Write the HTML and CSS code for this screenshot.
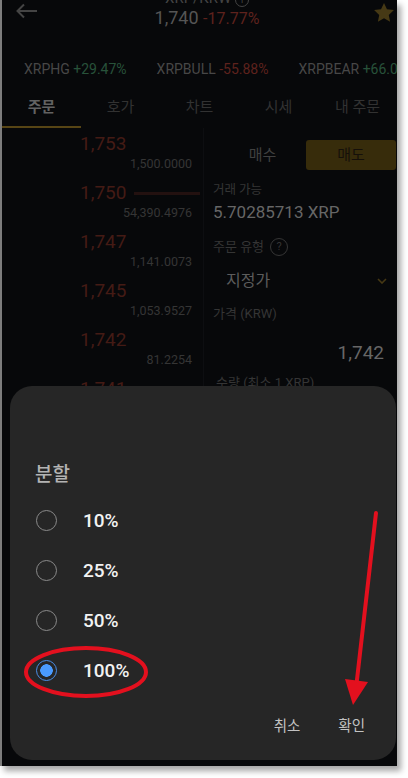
FILE: index.html
```html
<!DOCTYPE html>
<html>
<head>
    <title>XRP/KRW 주문</title>
    <link rel="stylesheet" href="styles.css">
</head>
<body>
    <div class="phone">
        <!-- Header -->
        <header class="top-bar">
            <svg class="back-icon" width="22" height="16" viewBox="0 0 22 16">
                <path d="M21 8H2M8 1.5L1.5 8L8 14.5" fill="none" stroke="#444" stroke-width="2"/>
            </svg>
            <div class="title-block">
                <div class="pair-name">XRP/KRW <span class="info-dot">i</span></div>
                <div class="pair-price">1,740 <span class="down">-17.77%</span></div>
            </div>
            <svg class="star-icon" width="20" height="19" viewBox="0 0 24 23">
                <path d="M12 0l3.6 7.6 8.4 1-6.2 5.8 1.6 8.3L12 18.6l-7.4 4.1 1.6-8.3L0 8.6l8.4-1z" fill="#463915"/>
            </svg>
        </header>

        <!-- Related tickers -->
        <div class="tickers">
            <span class="ticker">XRPHG <span class="up">+29.47%</span></span>
            <span class="ticker">XRPBULL <span class="down">-55.88%</span></span>
            <span class="ticker">XRPBEAR <span class="up">+66.05%</span></span>
        </div>

        <!-- Tabs -->
        <nav class="tabs">
            <div class="tab active">주문</div>
            <div class="tab">호가</div>
            <div class="tab">차트</div>
            <div class="tab">시세</div>
            <div class="tab">내 주문</div>
        </nav>

        <div class="trade">
            <!-- Order book -->
            <div class="book">
                <div class="book-row">
                    <div class="book-price">1,753</div>
                    <div class="book-qty">1,500.0000</div>
                </div>
                <div class="book-row">
                    <div class="book-price">1,750 <span class="depth-bar"></span></div>
                    <div class="book-qty">54,390.4976</div>
                </div>
                <div class="book-row">
                    <div class="book-price">1,747</div>
                    <div class="book-qty">1,141.0073</div>
                </div>
                <div class="book-row">
                    <div class="book-price">1,745</div>
                    <div class="book-qty">1,053.9527</div>
                </div>
                <div class="book-row">
                    <div class="book-price">1,742</div>
                    <div class="book-qty">81.2254</div>
                </div>
                <div class="book-row">
                    <div class="book-price">1,741</div>
                    <div class="book-qty">1,030.0000</div>
                </div>
            </div>

            <!-- Order form -->
            <div class="order-form">
                <div class="side-toggle">
                    <div class="side buy">매수</div>
                    <div class="side sell">매도</div>
                </div>
                <div class="field-label">거래 가능</div>
                <div class="balance">5.70285713 XRP</div>
                <div class="field-label type-label">주문 유형 <span class="help">?</span></div>
                <div class="select-row">
                    <span>지정가</span>
                    <svg width="10" height="6" viewBox="0 0 10 6"><path d="M1 1l4 4 4-4" fill="none" stroke="#463814" stroke-width="1.6"/></svg>
                </div>
                <div class="field-label price-label">가격 (KRW)</div>
                <div class="price-input">1,742</div>
                <div class="field-label qty-label">수량 (최소 1 XRP)</div>
            </div>
        </div>

        <!-- Split dialog -->
        <div class="scrim">
            <div class="sheet">
                <div class="sheet-title">분할</div>
                <div class="option"><span class="radio"></span><span class="option-label">10%</span></div>
                <div class="option"><span class="radio"></span><span class="option-label">25%</span></div>
                <div class="option"><span class="radio"></span><span class="option-label">50%</span></div>
                <div class="option"><span class="radio checked"></span><span class="option-label">100%</span></div>
                <div class="sheet-actions">
                    <span class="action">취소</span>
                    <span class="action">확인</span>
                </div>
            </div>
        </div>
    </div>

    <!-- Red markup drawn over the screenshot -->
    <svg class="marks" width="408" height="778" viewBox="0 0 408 778">
        <ellipse cx="86" cy="672" rx="60" ry="24" fill="none" stroke="#e3101e" stroke-width="4"/>
        <path d="M376 513L356.5 684" stroke="#e3101e" stroke-width="4" stroke-linecap="round"/>
        <path d="M345 679L368 682L353 705z" fill="#e3101e"/>
    </svg>
</body>
</html>
```

FILE: styles.css
```css
body {
    margin: 0;
    background-color: #fff;
    position: relative;
    width: 408px;
    height: 778px;
    overflow: hidden;
}
.phone {
    position: relative;
    width: 395px;
    height: 766px;
    border-left: 2px solid #7d7d7d;
    background-color: #07080a;
    box-shadow: 4px 5px 6px rgba(0, 0, 0, 0.35);
    overflow: hidden;
    font-family: Roboto, "Noto Sans CJK KR", sans-serif;
}

/* Header */
.top-bar {
    height: 50px;
    display: flex;
    align-items: flex-start;
}
.back-icon {
    margin: 3px 0 0 14px;
}
.title-block {
    flex: 1;
    margin-top: -11px;
    padding-left: 2px;
    text-align: center;
}
.pair-name {
    font-size: 15px;
    line-height: 18px;
    color: #444;
}
.info-dot {
    display: inline-block;
    width: 12px;
    height: 12px;
    border: 1px solid #444;
    border-radius: 50%;
    font-size: 9px;
    line-height: 12px;
}
.pair-price {
    font-size: 18px;
    line-height: 22px;
    color: #555;
}
.pair-price .down {
    font-size: 16px;
}
.star-icon {
    margin: 3px 3px 0 0;
}
.up {
    color: #28523a;
}
.down {
    color: #5e221d;
}

/* Tickers */
.tickers {
    height: 38px;
    display: flex;
    align-items: center;
    gap: 30px;
    padding-left: 22px;
    white-space: nowrap;
    font-size: 14px;
    color: #474747;
}

/* Tabs */
.tabs {
    height: 40px;
    display: flex;
}
.tab {
    flex: 1;
    text-align: center;
    font-size: 15px;
    line-height: 38px;
    color: #323232;
    border-bottom: 2px solid transparent;
}
.tab.active {
    color: #626262;
    font-weight: bold;
    border-bottom-color: #574515;
}

/* Order book + form */
.trade {
    display: flex;
}
.book {
    width: 201px;
    padding-top: 5px;
    border-right: 1px solid #0d0e11;
}
.book-row {
    height: 49px;
}
.book-price {
    display: flex;
    align-items: center;
    padding-left: 78px;
    font-size: 19px;
    line-height: 22px;
    color: #441b15;
}
.depth-bar {
    width: 66px;
    height: 3px;
    margin-left: auto;
    margin-right: 3px;
    background-color: #231110;
}
.book-qty {
    margin-top: 2px;
    padding-right: 11px;
    text-align: right;
    font-size: 12.5px;
    line-height: 14px;
    color: #353535;
}

.order-form {
    flex: 1;
    padding-left: 9px;
}
.side-toggle {
    display: flex;
    margin-top: 12px;
    height: 30px;
}
.side {
    font-size: 15px;
    line-height: 30px;
    text-align: center;
}
.side.buy {
    flex: 1;
    padding-left: 6px;
    color: #404040;
}
.side.sell {
    width: 90px;
    margin-right: 1px;
    border-radius: 3px;
    background-color: #372c0b;
    color: #15100a;
}
.field-label {
    margin-top: 12px;
    font-size: 12.5px;
    line-height: 16px;
    color: #353535;
}
.balance {
    margin-top: 3px;
    font-size: 17px;
    line-height: 22px;
    color: #666;
}
.type-label {
    display: flex;
    align-items: center;
    gap: 6px;
    margin-top: 15px;
    font-size: 13px;
}
.help {
    width: 16px;
    height: 16px;
    border: 1px solid #353535;
    border-radius: 50%;
    text-align: center;
    font-size: 11px;
    line-height: 16px;
}
.select-row {
    display: flex;
    align-items: center;
    justify-content: space-between;
    margin-top: 14px;
    padding: 0 10px 0 13px;
    font-size: 16px;
    line-height: 22px;
    color: #5c5c5c;
}
.price-label {
    margin-top: 14px;
    font-size: 13px;
}
.price-input {
    margin-top: 20px;
    padding-right: 13px;
    text-align: right;
    font-size: 19px;
    line-height: 22px;
    color: #666;
}
.qty-label {
    margin-top: 11px;
    padding-left: 3px;
    font-size: 13px;
}

/* Dialog */
.scrim {
    position: absolute;
    inset: 0;
    display: flex;
    align-items: flex-end;
    padding: 0 1px 6px 8px;
}
.sheet {
    flex: 1;
    height: 374px;
    box-sizing: border-box;
    padding: 76px 31px 0 25px;
    border-radius: 22px;
    background-color: #262626;
}
.sheet-title {
    font-size: 19px;
    line-height: 26px;
    font-weight: 500;
    color: #b3b3b3;
    margin-bottom: 7px;
}
.option {
    height: 50px;
    display: flex;
    align-items: center;
}
.radio {
    box-sizing: border-box;
    width: 21px;
    height: 21px;
    margin-left: 1px;
    border: 1.5px solid #8a8a8a;
    border-radius: 50%;
}
.radio.checked {
    border-color: #4a8ee8;
    background: radial-gradient(circle, #4a9bff 0 6px, transparent 6.5px);
}
.option-label {
    margin-left: 26px;
    font-size: 19px;
    font-weight: 500;
    color: #f2f2f2;
}
.sheet-actions {
    display: flex;
    justify-content: flex-end;
    gap: 38px;
    margin-top: 15px;
    font-size: 14.5px;
    line-height: 34px;
    color: #c2c2c2;
}

.marks {
    position: absolute;
    left: 0;
    top: 0;
}
```
